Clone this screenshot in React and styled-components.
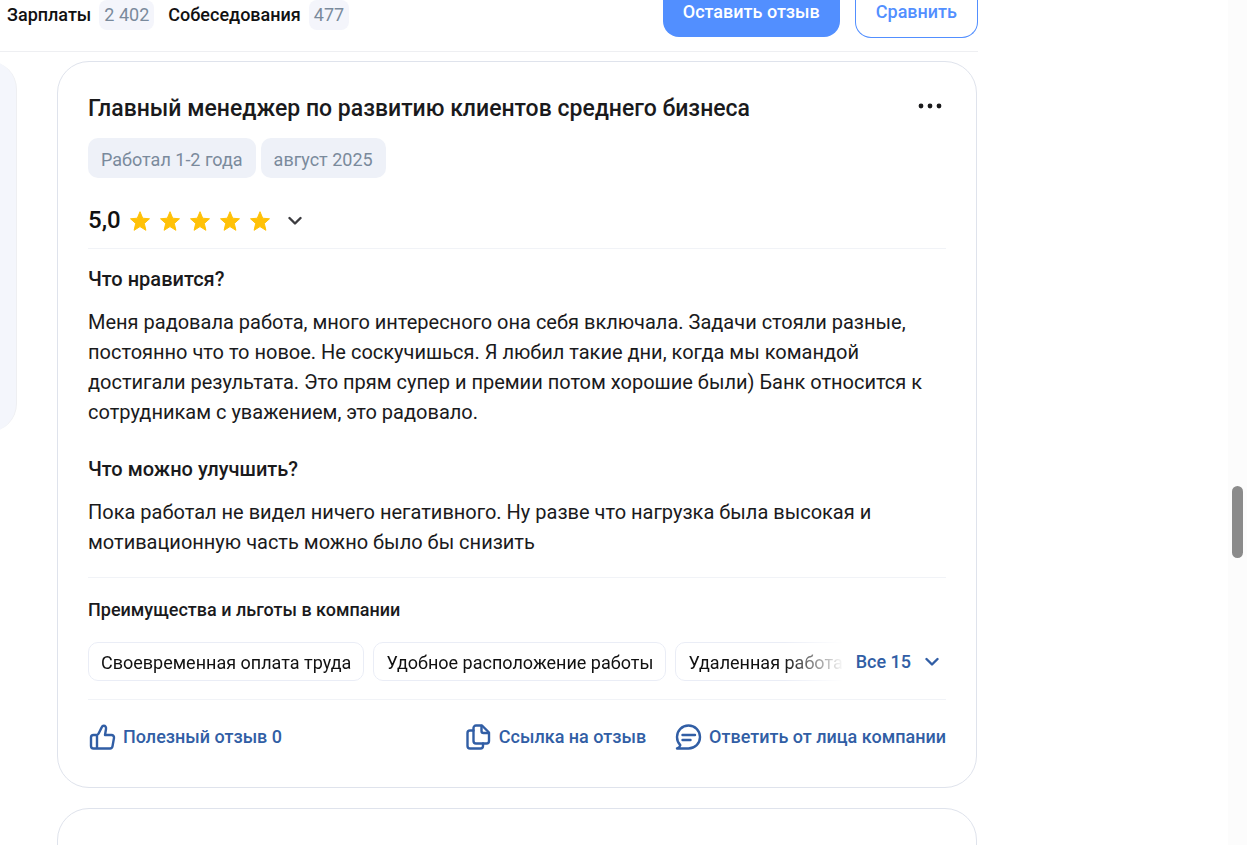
import React from "react";
import styled, { createGlobalStyle } from "styled-components";

const GlobalStyle = createGlobalStyle`
  *, *::before, *::after { box-sizing: border-box; }
  body { margin: 0; background: #fff; color: #1a1a1c; font-family: Roboto, "Liberation Sans", sans-serif; }
  h2, h3, h4, p, ul { margin: 0; padding: 0; }
  button { font-family: inherit; border: 0; padding: 0; background: none; cursor: pointer; }
`;

const Page = styled.div`
  display: flex;
  justify-content: space-between;
  height: 100vh;
  overflow: hidden;
`;

const Main = styled.main`
  flex: 1;
  max-width: 978px;
  min-width: 0;
`;

const Header = styled.header`
  display: flex;
  justify-content: space-between;
  align-items: flex-start;
  height: 52px;
  padding-left: 7px;
  border-bottom: 1px solid #eeeff2;
`;

const Tabs = styled.nav`
  display: flex;
  gap: 14px;
`;

const Tab = styled.a`
  display: flex;
  gap: 8px;
  line-height: 30px;
  font-size: 18px;
  font-weight: 500;
  color: #111;
  text-decoration: none;
`;

const Count = styled.span`
  padding: 0 5px;
  border-radius: 8px;
  background: #f4f5fb;
  color: #7a8a9c;
  font-weight: 400;
`;

const HeaderActions = styled.div`
  display: flex;
  align-items: flex-start;
  gap: 15px;
`;

const HeaderButton = styled.button`
  height: ${(p) => (p.$primary ? "37px" : "38px")};
  padding: 0 20px 13px;
  border: ${(p) => (p.$primary ? "0" : "1px solid #528fff")};
  border-top: 0;
  border-radius: 0 0 16px 16px;
  background: ${(p) => (p.$primary ? "#528fff" : "#fff")};
  color: ${(p) => (p.$primary ? "#fff" : "#528fff")};
  font-size: 18px;
  font-weight: 500;
  line-height: 24px;
`;

const Columns = styled.div`
  display: flex;
  align-items: flex-start;
  gap: 40px;
  padding: 9px 1px 0 0;
`;

const SidePanel = styled.aside`
  flex: 0 0 57px;
  height: 371px;
  margin-left: -40px;
  border-right: 1px solid #eeeff2;
  border-radius: 32px;
  background: #f4f6fc;
`;

const Feed = styled.div`
  flex: 1;
  min-width: 0;
  display: flex;
  flex-direction: column;
  gap: 20px;
`;

const Card = styled.article`
  min-height: 120px;
  padding: 30px 30px 37px;
  border: 1px solid #dfe3ec;
  border-radius: 32px;
`;

const CardHead = styled.div`
  display: flex;
  justify-content: space-between;
`;

const Title = styled.h2`
  font-size: 23px;
  font-weight: 500;
  line-height: 34px;
`;

const MenuButton = styled.button`
  display: flex;
  align-items: center;
  height: 28px;
  margin-right: 4px;
`;

const Pills = styled.div`
  display: flex;
  gap: 5px;
  margin: 12px 0 26px;
`;

const Pill = styled.span`
  height: 40px;
  padding: 0 13px;
  border-radius: 10px;
  background: #eef1f8;
  color: #7a8a9c;
  font-size: 18px;
  line-height: 43px;
`;

const Rating = styled.button`
  display: flex;
  align-items: center;
  gap: 9px;
  height: 32px;
  color: #111;
  font-size: 24px;
  font-weight: 500;
  line-height: 32px;
`;

const Stars = styled.span`
  display: flex;
  gap: 10px;
  padding-top: 2px;
`;

const RatingChevron = styled.span`
  display: flex;
  padding: 2px 0 0 9px;
`;

const Divider = styled.hr`
  height: 1px;
  margin: ${(p) => p.$space};
  border: 0;
  background: #f1f3f7;
`;

const Question = styled.h3`
  margin-bottom: 13px;
  font-size: 20px;
  font-weight: 500;
  line-height: 30px;
`;

const Answer = styled.p`
  font-size: 20px;
  line-height: 30px;

  & + ${Question} { margin-top: 27px; }
`;

const BenefitsTitle = styled.h4`
  margin-bottom: 20px;
  font-size: 18px;
  font-weight: 500;
  line-height: 24px;
`;

const Benefits = styled.div`
  display: flex;
  align-items: center;
  gap: 12px;
`;

const BenefitList = styled.ul`
  flex: 1;
  min-width: 0;
  display: flex;
  gap: 9px;
  overflow: hidden;
  list-style: none;
  mask-image: linear-gradient(to right, #000 calc(100% - 60px), transparent);
`;

const Benefit = styled.li`
  flex: none;
  height: 39px;
  padding: 0 12px;
  border: 1px solid #eaedf6;
  border-radius: 10px;
  color: #111;
  font-size: 18px;
  line-height: 39px;
`;

const ShowAll = styled.button`
  display: flex;
  align-items: center;
  gap: 14px;
  padding-top: 1px;
  margin-right: 7px;
  color: #315ea5;
  font-size: 18px;
  font-weight: 500;
  line-height: 24px;
`;

const Actions = styled.div`
  display: flex;
  justify-content: space-between;
`;

const ActionGroup = styled.div`
  display: flex;
  gap: 28px;
`;

const Action = styled.button`
  display: flex;
  align-items: center;
  gap: 7px;
  height: 26px;
  color: #315ea5;
  font-size: 18px;
  font-weight: 500;
  line-height: 26px;
`;

const Rail = styled.div`
  flex: 0 0 19px;
  display: flex;
  justify-content: center;
  align-items: flex-start;
  padding-top: 486px;
  background: #fcfcfc;
`;

const Thumb = styled.div`
  width: 11px;
  height: 72px;
  border-radius: 6px;
  background: #8b8b8b;
`;

const Star = () => (
  <svg width="20" height="20" viewBox="0 0 20 20" fill="#ffc107" stroke="#ffc107" strokeWidth="1" strokeLinejoin="round">
    <path d="M10 .7 12.7 7.2 19.5 7.8 14.3 12.4 15.9 19.3 10 15.6 4.1 19.3 5.7 12.4 .5 7.8 7.3 7.2Z" />
  </svg>
);

const Chevron = ({ color }) => (
  <svg width="14" height="10" viewBox="0 0 14 10" fill="none" stroke={color} strokeWidth="2.4" strokeLinecap="round" strokeLinejoin="round">
    <path d="m1.5 2 5.5 5.5L12.5 2" />
  </svg>
);

const Dots = () => (
  <svg width="24" height="6" viewBox="0 0 24 6" fill="#1a1a1c">
    <circle cx="3" cy="3" r="2.4" />
    <circle cx="12" cy="3" r="2.4" />
    <circle cx="21" cy="3" r="2.4" />
  </svg>
);

const iconProps = {
  width: 28,
  height: 28,
  viewBox: "0 0 28 28",
  fill: "none",
  stroke: "currentColor",
  strokeWidth: 2.4,
  strokeLinecap: "round",
  strokeLinejoin: "round",
};

const ThumbUp = () => (
  <svg {...iconProps}>
    <path d="M9 12H5.5A2.5 2.500 0 0 0 3 14.5V23a2.500 2.500 0 0 0 2.500 2.500H22a2.500 2.500 0 0 0 2.500-2.100l1.500-8.500a2.500 2.500 0 0 0-2.500-2.900H17l1-6c.3-2-.6-3.300-2.300-3.300-1 0-1.500.5-1.900 1.400L11 9.800C10.400 11.200 9.700 12 9 12v13.300" />
  </svg>
);

const Copy = () => (
  <svg {...iconProps}>
    <path d="M9.500 7.500H6A2.500 2.500 0 0 0 3.500 10v13A2.500 2.500 0 0 0 6 25.500h10.500A2.500 2.500 0 0 0 19 23v-2.500" />
    <path d="M18 2.500h-6A2.500 2.500 0 0 0 9.500 5v13a2.500 2.500 0 0 0 2.500 2.500h10.500A2.500 2.500 0 0 0 25 18V9.500Z" />
    <path d="M17.500 3v5a2 2 0 0 0 2 2h5" />
  </svg>
);

const Reply = () => (
  <svg {...iconProps}>
    <path d="M3 25.500h11.500C21 25.500 26 20.600 26 14S21 2.500 14.500 2.500 3 7.600 3 14c0 3.300 1.200 6 3.300 8.200C5.800 24 4.600 25 3 25.500Z" />
    <path d="M8.500 12h12.500M8.500 17h8" />
  </svg>
);

const benefits = ["Своевременная оплата труда", "Удобное расположение работы", "Удаленная работа"];

export default function App() {
  return (
    <>
      <GlobalStyle />
      <Page>
        <Main>
          <Header>
            <Tabs>
              <Tab href="#salaries">Зарплаты <Count>2 402</Count></Tab>
              <Tab href="#interviews">Собеседования <Count>477</Count></Tab>
            </Tabs>
            <HeaderActions>
              <HeaderButton $primary>Оставить отзыв</HeaderButton>
              <HeaderButton>Сравнить</HeaderButton>
            </HeaderActions>
          </Header>
          <Columns>
            <SidePanel />
            <Feed>
              <Card>
                <CardHead>
                  <Title>Главный менеджер по развитию клиентов среднего бизнеса</Title>
                  <MenuButton aria-label="Меню"><Dots /></MenuButton>
                </CardHead>
                <Pills>
                  <Pill>Работал 1-2 года</Pill>
                  <Pill>август 2025</Pill>
                </Pills>
                <Rating>
                  5,0
                  <Stars>{[1, 2, 3, 4, 5].map((n) => <Star key={n} />)}</Stars>
                  <RatingChevron><Chevron color="#3c3c40" /></RatingChevron>
                </Rating>
                <Divider $space="12px 0 15px" />
                <Question>Что нравится?</Question>
                <Answer>
                  Меня радовала работа, много интересного она себя включала. Задачи стояли разные, постоянно что то новое. Не соскучишься. Я любил такие дни, когда мы командой достигали результата. Это прям супер и премии потом хорошие были) Банк относится к сотрудникам с уважением, это радовало.
                </Answer>
                <Question>Что можно улучшить?</Question>
                <Answer>
                  Пока работал не видел ничего негативного. Ну разве что нагрузка была высокая и мотивационную часть можно было бы снизить
                </Answer>
                <Divider $space="20px 0" />
                <BenefitsTitle>Преимущества и льготы в компании</BenefitsTitle>
                <Benefits>
                  <BenefitList>
                    {benefits.map((b) => <Benefit key={b}>{b}</Benefit>)}
                  </BenefitList>
                  <ShowAll>Все 15 <Chevron color="currentColor" /></ShowAll>
                </Benefits>
                <Divider $space="18px 0 24px" />
                <Actions>
                  <Action><ThumbUp />Полезный отзыв 0</Action>
                  <ActionGroup>
                    <Action><Copy />Ссылка на отзыв</Action>
                    <Action><Reply />Ответить от лица компании</Action>
                  </ActionGroup>
                </Actions>
              </Card>
              <Card />
            </Feed>
          </Columns>
        </Main>
        <Rail><Thumb /></Rail>
      </Page>
    </>
  );
}
